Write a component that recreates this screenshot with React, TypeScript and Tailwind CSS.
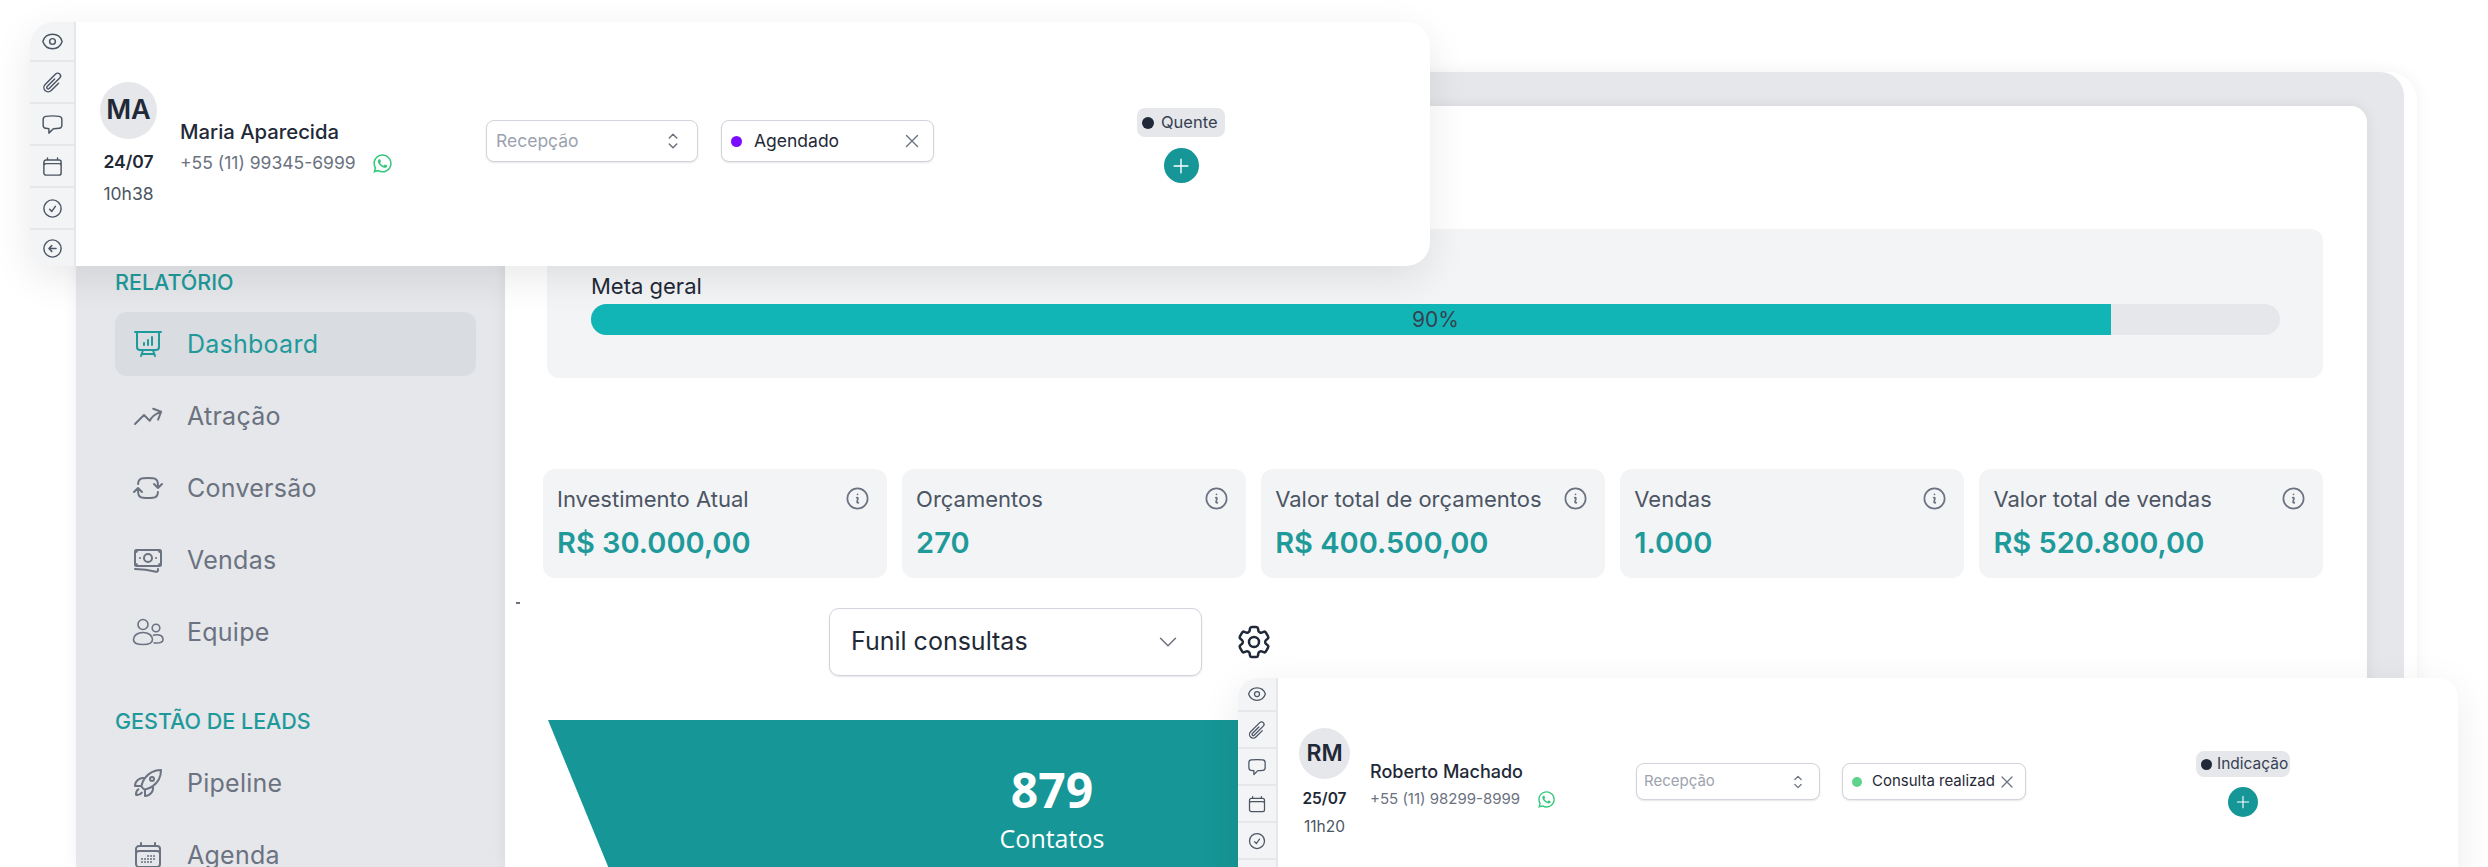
import type { ReactNode } from "react";
import { FaWhatsapp } from "react-icons/fa";
import {
  HiOutlineArrowLeftCircle,
  HiOutlineArrowPathRoundedSquare,
  HiOutlineArrowTrendingUp,
  HiOutlineBanknotes,
  HiOutlineCalendar,
  HiOutlineCalendarDays,
  HiOutlineChatBubbleLeft,
  HiOutlineCheckCircle,
  HiOutlineChevronDown,
  HiOutlineChevronUpDown,
  HiOutlineCog6Tooth,
  HiOutlineEye,
  HiOutlineInformationCircle,
  HiOutlinePaperClip,
  HiOutlinePlus,
  HiOutlinePresentationChartBar,
  HiOutlineRocketLaunch,
  HiOutlineXMark,
} from "react-icons/hi2";

function TeamIcon({ className }: { className?: string }) {
  return (
    <svg viewBox="0 0 32 28" fill="none" stroke="currentColor" strokeWidth="1.6" className={className}>
      <circle cx="11" cy="6.5" r="5" />
      <circle cx="24" cy="10" r="3.8" />
      <path d="M1.5 21.5c0-4 4-7 9.5-7s9.5 3 9.5 7-4 5-9.5 5-9.5-1-9.5-5z" />
      <path d="M21 17.5c1-.5 2-.7 3.5-.7 4 0 6.500 1.800 6.500 4.600 0 2.800-2.500 3.600-6.500 3.600-1 0-2-.1-3-.3" />
    </svg>
  );
}

const railIcons = [
  HiOutlineEye,
  HiOutlinePaperClip,
  HiOutlineChatBubbleLeft,
  HiOutlineCalendar,
  HiOutlineCheckCircle,
  HiOutlineArrowLeftCircle,
];

function NavItem({ icon, label, active }: { icon: ReactNode; label: string; active?: boolean }) {
  return (
    <div
      className={
        active
          ? "flex h-16 items-center gap-[23px] rounded-xl bg-[#d9dce1] pl-[17px] text-[#1f9a9a]"
          : "flex h-16 items-center gap-[23px] rounded-xl pl-[17px] text-[#6b7280]"
      }
    >
      {icon}
      <span className="text-[25px] leading-8 tracking-[0.01em]">{label}</span>
    </div>
  );
}

function Sidebar() {
  const icon = "h-[32px] w-[32px] shrink-0";
  return (
    <aside className="h-full w-[429px] shrink-0 pl-[39px] pr-[29px] pt-[196px]">
      <p className="mb-4 text-[21.500px] font-medium leading-7 text-[#1f9a9a]">RELATÓRIO</p>
      <div className="flex flex-col gap-2">
        <NavItem active label="Dashboard" icon={<HiOutlinePresentationChartBar className={icon} />} />
        <NavItem label="Atração" icon={<HiOutlineArrowTrendingUp className={icon} />} />
        <NavItem label="Conversão" icon={<HiOutlineArrowPathRoundedSquare className={icon} />} />
        <NavItem label="Vendas" icon={<HiOutlineBanknotes className={icon} />} />
        <NavItem label="Equipe" icon={<TeamIcon className={icon} />} />
      </div>
      <p className="mb-4 mt-[43px] text-[21.500px] font-medium leading-7 text-[#1f9a9a]">GESTÃO DE LEADS</p>
      <div className="flex flex-col gap-2">
        <NavItem label="Pipeline" icon={<HiOutlineRocketLaunch className={icon} />} />
        <NavItem label="Agenda" icon={<HiOutlineCalendarDays className={icon} />} />
      </div>
    </aside>
  );
}

function StatCard({ title, value }: { title: string; value: string }) {
  return (
    <div className="h-[109px] flex-1 rounded-xl bg-[#f3f4f6] pl-[14px] pr-[16px] pt-4">
      <div className="flex items-center justify-between">
        <span className="text-[22px] leading-6 text-[#4b5563]">{title}</span>
        <HiOutlineInformationCircle className="h-[27px] w-[27px] text-[#6b7280]" />
      </div>
      <p className="mt-[13px] text-[29px] font-semibold leading-9 text-[#1f9a9a]">{value}</p>
    </div>
  );
}

const stats = [
  { title: "Investimento Atual", value: "R$ 30.000,00" },
  { title: "Orçamentos", value: "270" },
  { title: "Valor total de orçamentos", value: "R$ 400.500,00" },
  { title: "Vendas", value: "1.000" },
  { title: "Valor total de vendas", value: "R$ 520.800,00" },
];

function Main() {
  return (
    <main className="relative h-full flex-1 rounded-tr-[16px] bg-white pl-[42px] pr-[44px] pt-[123px] shadow-[0_0_14px_rgba(0,0,0,0.07)]">
      <span className="absolute left-[11px] top-[496px] h-[2px] w-[4px] bg-[#6b7280]" />
      <section className="h-[149px] rounded-xl bg-[#f3f4f6] pl-[44px] pr-[43px] pt-[44px]">
        <p className="text-[22px] leading-[26px] text-[#1f2937]">Meta geral</p>
        <div className="relative mt-[5px] flex h-[31px] items-center justify-center overflow-hidden rounded-full bg-[#e5e7eb]">
          <div className="absolute inset-y-0 left-0 w-[90%] bg-[#12b5b5]" />
          <span className="relative text-[21px] text-[#374151]">90%</span>
        </div>
      </section>

      <div className="-ml-[4px] mt-[91px] flex gap-[15.500px]">
        {stats.map((s) => (
          <StatCard key={s.title} title={s.title} value={s.value} />
        ))}
      </div>

      <div className="mt-[30px] flex items-center gap-[32px] pl-[282px]">
        <div className="flex h-[68px] w-[373px] items-center justify-between rounded-[10px] border border-[#d1d5db] bg-white pl-[21px] pr-[21px] shadow-[0_1px_2px_rgba(0,0,0,0.1)]">
          <span className="text-[25px] text-[#1f2937]">Funil consultas</span>
          <HiOutlineChevronDown className="h-[24px] w-[24px] text-[#6b7280]" />
        </div>
        <HiOutlineCog6Tooth className="h-[40px] w-[40px] text-[#1f2937]" />
      </div>

      <div className="ml-px mt-[44px] h-[300px] w-[1008px] bg-[#169696] pt-[40px] text-center font-['Open_Sans',sans-serif] text-white [clip-path:polygon(0_0,100%_0,88%_100%,12.200%_100%)]">
        <p className="text-[48px] font-bold leading-[60px]">879</p>
        <p className="text-[25px] leading-9">Contatos</p>
      </div>
    </main>
  );
}

function LeadCard({
  large,
  initials,
  date,
  time,
  name,
  phone,
  statusColor,
  status,
  tag,
}: {
  large?: boolean;
  initials: string;
  date: string;
  time: string;
  name: string;
  phone: string;
  statusColor: string;
  status: string;
  tag: string;
}) {
  const field = "flex items-center justify-between rounded-lg border border-[#d1d5db] bg-white shadow-[0_1px_2px_rgba(0,0,0,0.1)]";
  return (
    <div
      className={
        large
          ? "absolute left-[30px] top-[22px] flex h-[244px] w-[1400px] rounded-[24px] bg-white shadow-[0_12px_40px_rgba(0,0,0,0.09)]"
          : "absolute left-[1238px] top-[678px] flex h-[260px] w-[1220px] rounded-[20px] bg-white shadow-[0_10px_40px_rgba(0,0,0,0.08)]"
      }
    >
      <div className={large ? "flex w-[46px] shrink-0 flex-col overflow-hidden rounded-l-[24px] border-r-2 border-[#e5e7eb] bg-[#f3f4f6]" : "flex w-[40px] shrink-0 flex-col overflow-hidden rounded-l-[20px] border-r-2 border-[#e5e7eb] bg-[#f3f4f6]"}>
        {railIcons.map((Icon, i) => (
          <div
            key={i}
            className={
              large
                ? "flex h-[42px] shrink-0 items-center justify-center border-b-2 border-[#e5e7eb] text-[#4b5563] first:h-[40px] last:h-[37px] last:border-b-0"
                : "flex h-[37px] shrink-0 items-center justify-center border-b-2 border-[#e5e7eb] text-[#4b5563] first:h-[34px]"
            }
          >
            <Icon className={large ? "h-[23px] w-[23px]" : "h-[20px] w-[20px]"} />
          </div>
        ))}
      </div>

      <div className={large ? "flex items-start pl-[24px]" : "flex items-start pl-[21px]"}>
        <div className={large ? "mt-[60px] flex w-[57px] flex-col items-center" : "mt-[50px] flex w-[51px] flex-col items-center"}>
          <div className={large ? "flex h-[57px] w-[57px] items-center justify-center rounded-full bg-[#e5e7eb] text-[27px] font-semibold text-[#1f2937]" : "flex h-[51px] w-[51px] items-center justify-center rounded-full bg-[#e5e7eb] text-[23px] font-semibold text-[#1f2937]"}>
            {initials}
          </div>
          <span className={large ? "mt-[11px] whitespace-nowrap text-[17.500px] font-semibold leading-6 text-[#1f2937]" : "mt-[10px] whitespace-nowrap text-[15.500px] font-semibold leading-5 text-[#1f2937]"}>{date}</span>
          <span className={large ? "mt-2 whitespace-nowrap text-[17.500px] leading-6 text-[#4b5563]" : "mt-2 whitespace-nowrap text-[15.500px] leading-5 text-[#4b5563]"}>{time}</span>
        </div>

        <div className={large ? "ml-[23px] mt-[96px] w-[306px]" : "ml-[20px] mt-[82px] w-[266px]"}>
          <p className={large ? "text-[20.300px] font-medium leading-7 text-[#1f2937]" : "text-[18px] font-medium leading-6 text-[#1f2937]"}>{name}</p>
          <div className={large ? "mt-[5px] flex items-center gap-[16px]" : "mt-[5px] flex items-center gap-[17px]"}>
            <span className={large ? "text-[17.500px] leading-6 text-[#6b7280]" : "text-[15px] leading-5 text-[#6b7280]"}>{phone}</span>
            <FaWhatsapp className={large ? "h-[21px] w-[21px] text-[#34c77b]" : "h-[19px] w-[19px] text-[#34c77b]"} />
          </div>
        </div>

        <div className={large ? `${field} mt-[98px] h-[42px] w-[212px] pl-[9px] pr-[12px]` : `${field} mt-[85px] h-[37px] w-[184px] pl-[7px] pr-[11px]`}>
          <span className={large ? "text-[17.500px] text-[#9ca3af]" : "text-[15px] text-[#9ca3af]"}>Recepção</span>
          <HiOutlineChevronUpDown className={large ? "h-[24px] w-[24px] text-[#6b7280]" : "h-[20px] w-[20px] text-[#6b7280]"} />
        </div>

        <div className={large ? `${field} ml-[23px] mt-[98px] h-[42px] w-[213px] pl-[9px] pr-[10px]` : `${field} ml-[22px] mt-[85px] h-[37px] w-[184px] pl-[9px] pr-[8px]`}>
          <span className={large ? "flex items-center gap-[12px] text-[17.500px] text-[#1f2937]" : "flex items-center gap-[10px] text-[15px] text-[#1f2937]"}>
            <span className={large ? "h-[11px] w-[11px] rounded-full" : "h-[10px] w-[10px] rounded-full"} style={{ backgroundColor: statusColor }} />
            {status}
          </span>
          <HiOutlineXMark className={large ? "h-[22px] w-[22px] text-[#6b7280]" : "h-[20px] w-[20px] text-[#6b7280]"} />
        </div>

        <div className={large ? "ml-[203px] mt-[86px] flex w-[88px] flex-col items-center gap-[11px]" : "ml-[170px] mt-[73px] flex w-[94px] flex-col items-center gap-[10px]"}>
          <span className={large ? "flex h-[29px] w-full items-center gap-[7px] rounded-lg bg-[#e5e7eb] pl-[5px] text-[16.500px] text-[#374151]" : "flex h-[26px] w-full items-center gap-[5px] rounded-lg bg-[#e5e7eb] pl-[5px] text-[15.500px] text-[#374151]"}>
            <span className={large ? "h-[12px] w-[12px] rounded-full bg-[#1f2937]" : "h-[11px] w-[11px] rounded-full bg-[#1f2937]"} />
            {tag}
          </span>
          <span className={large ? "flex h-[35px] w-[35px] items-center justify-center rounded-full bg-[#169696] text-white" : "flex h-[30px] w-[30px] items-center justify-center rounded-full bg-[#169696] text-white"}>
            <HiOutlinePlus className={large ? "h-[22px] w-[22px]" : "h-[18px] w-[18px]"} />
          </span>
        </div>
      </div>
    </div>
  );
}

export default function App() {
  return (
    <div className="relative h-[867px] w-[2488px] overflow-hidden bg-white pt-[72px] font-['Inter',sans-serif]">
      <div className="ml-[76px] h-[795px] w-[2341px] rounded-tr-[28px] bg-white pr-[13px] shadow-[0_0_16px_rgba(0,0,0,0.06)]">
        <div className="flex h-full rounded-tr-[24px] bg-[#e5e7eb] pr-[37px] pt-[34px]">
          <div className="-mt-[34px] h-[calc(100%+34px)]">
            <Sidebar />
          </div>
          <Main />
        </div>
      </div>

      <LeadCard
        large
        initials="MA"
        date="24/07"
        time="10h38"
        name="Maria Aparecida"
        phone="+55 (11) 99345-6999"
        statusColor="#7c0cff"
        status="Agendado"
        tag="Quente"
      />
      <LeadCard
        initials="RM"
        date="25/07"
        time="11h20"
        name="Roberto Machado"
        phone="+55 (11) 98299-8999"
        statusColor="#5fd38d"
        status="Consulta realizad"
        tag="Indicação"
      />
    </div>
  );
}
